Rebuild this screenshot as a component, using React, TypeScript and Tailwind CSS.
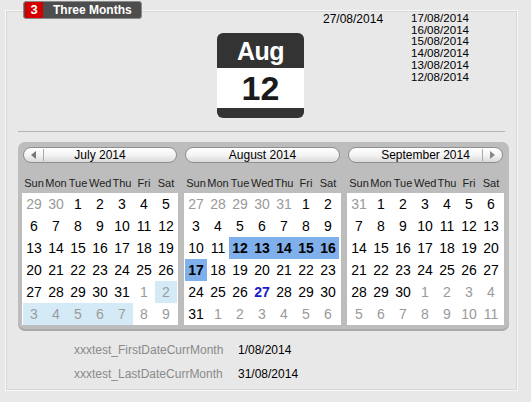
import React from 'react'

type Month = {
  title: string
  nav?: 'prev' | 'next'
  rows: number[][]
}

const MONTHS: Month[] = [
  {
    title: 'July 2014',
    nav: 'prev',
    rows: [
      [29, 30, 1, 2, 3, 4, 5],
      [6, 7, 8, 9, 10, 11, 12],
      [13, 14, 15, 16, 17, 18, 19],
      [20, 21, 22, 23, 24, 25, 26],
      [27, 28, 29, 30, 31, 1, 2],
      [3, 4, 5, 6, 7, 8, 9],
    ],
  },
  {
    title: 'August 2014',
    rows: [
      [27, 28, 29, 30, 31, 1, 2],
      [3, 4, 5, 6, 7, 8, 9],
      [10, 11, 12, 13, 14, 15, 16],
      [17, 18, 19, 20, 21, 22, 23],
      [24, 25, 26, 27, 28, 29, 30],
      [31, 1, 2, 3, 4, 5, 6],
    ],
  },
  {
    title: 'September 2014',
    nav: 'next',
    rows: [
      [31, 1, 2, 3, 4, 5, 6],
      [7, 8, 9, 10, 11, 12, 13],
      [14, 15, 16, 17, 18, 19, 20],
      [21, 22, 23, 24, 25, 26, 27],
      [28, 29, 30, 1, 2, 3, 4],
      [5, 6, 7, 8, 9, 10, 11],
    ],
  },
]

const DAYS = ['Sun', 'Mon', 'Tue', 'Wed', 'Thu', 'Fri', 'Sat']

// highlighted cells: month-row-col
const SELECTED = new Set(['1-2-2', '1-2-3', '1-2-4', '1-2-5', '1-2-6', '1-3-0'])
const WEEK = new Set(['0-4-6', '0-5-0', '0-5-1', '0-5-2', '0-5-3', '0-5-4'])
const TODAY = '1-4-3'

const RECENT = ['17/08/2014', '16/08/2014', '15/08/2014', '14/08/2014', '13/08/2014', '12/08/2014']

function isOther(row: number, d: number) {
  return (row === 0 && d > 7) || (row >= 4 && d < 15)
}

function MonthGrid({ month, mi }: { month: Month; mi: number }) {
  return (
    <div className="flex flex-col">
      <div className="relative mx-[1px] flex h-4 items-center justify-center rounded-full border border-[#8f8f8f] bg-gradient-to-b from-white via-[#f4f4f4] to-[#d9d9d9] text-[12px] leading-none text-black">
        {month.nav === 'prev' ? (
          <span className="absolute left-[7px] top-[1px] flex h-[12px] items-center gap-[7px]">
            <span className="h-0 w-0 border-y-[4px] border-r-[5px] border-y-transparent border-r-[#777]" />
            <span className="h-[12px] w-px bg-[#aaa]" />
          </span>
        ) : null}
        {month.nav === 'next' ? (
          <span className="absolute right-[7px] top-[1px] flex h-[12px] items-center gap-[7px]">
            <span className="h-[12px] w-px bg-[#aaa]" />
            <span className="h-0 w-0 border-y-[4px] border-l-[5px] border-y-transparent border-l-[#888]" />
          </span>
        ) : null}
        {month.title}
      </div>
      <div className="flex h-[30px] items-center px-[1px] pt-[10px]">
        {DAYS.map((d) => (
          <span key={d} className="w-[22px] text-center text-[11px] leading-none text-[#222]">
            {d}
          </span>
        ))}
      </div>
      <div className="flex flex-col bg-white px-[1px]">
        {month.rows.map((row, ri) => (
          <div key={ri} className="flex h-[22px]">
            {row.map((d, ci) => {
              const key = `${mi}-${ri}-${ci}`
              const other = isOther(ri, d)
              let cls = 'text-black'
              if (other) cls = 'text-[#9a9a9a]'
              if (SELECTED.has(key)) cls = 'bg-[#7fb0ec] font-bold text-black'
              if (WEEK.has(key)) cls = 'bg-[#d4ebf7] text-[#9a9a9a]'
              if (key === TODAY) cls = 'font-bold text-[#1a1ac8]'
              return (
                <span
                  key={ci}
                  className={`flex w-[22px] items-center justify-center text-[14px] leading-none ${cls}`}
                >
                  {d}
                </span>
              )
            })}
          </div>
        ))}
      </div>
    </div>
  )
}

export default function App() {
  return (
    <div className="h-[402px] w-[531px] overflow-hidden bg-[#e8e8e8] pt-[10px] font-['Liberation_Sans',Arial,sans-serif]">
      <div className="relative ml-[5px] h-[381px] w-[513px] border border-[#f8f8f8] shadow-[inset_0_0_0_1px_#d6d6d6]">
        <div className="absolute -top-[10px] left-[17px] flex h-[18px] w-[119px] items-center overflow-hidden rounded-[3px] border border-[#8a8a8a] bg-[#4d4d4d]">
          <span className="ml-[1px] flex h-[16px] w-[18px] items-center justify-center bg-[#d40000] text-[13px] font-bold text-white">
            3
          </span>
          <span className="ml-[10px] text-[12px] font-bold text-white">Three Months</span>
        </div>

        <div className="flex h-[120px] items-start">
          <div className="ml-[211px] mt-[22px] flex h-[85px] w-[87px] flex-col overflow-hidden rounded-[6px] bg-[#333]">
            <div className="flex h-[35px] items-center justify-center pt-[2px] text-[25px] font-bold leading-none tracking-[-0.5px] text-white">
              Aug
            </div>
            <div className="flex h-[40px] items-center justify-center bg-white text-[34px] font-bold leading-none text-[#1a1a1a]">
              12
            </div>
          </div>
          <div className="ml-[19px] mt-[2px] w-[88px] text-[12px] leading-[12px] text-black">27/08/2014</div>
          <div className="mt-[1px] flex flex-col text-[11.6px] leading-[11.7px] text-black">
            {RECENT.map((r) => (
              <span key={r}>{r}</span>
            ))}
          </div>
        </div>

        <div className="mx-[12px] border-t border-[#b4b4b4]" />

        <div className="ml-[12px] mt-[10px] flex w-[491px] gap-[6px] rounded-[7px] bg-[#bdbdbd] pb-[4px] pl-[4px] pr-[5px] pt-[5px] shadow-[0_2px_0_#a9a9a9]">
          {MONTHS.map((m, i) => (
            <div key={m.title} className={i === 0 ? 'w-[156px]' : 'w-[157px]'}>
              <MonthGrid month={m} mi={i} />
            </div>
          ))}
        </div>

        <div className="mt-[9px] flex flex-col pl-[68px] text-[12px]">
          <div className="flex h-[24px] items-center">
            <span className="w-[164px] text-[#8a8a8a]">xxxtest_FirstDateCurrMonth</span>
            <span className="text-black">1/08/2014</span>
          </div>
          <div className="flex h-[24px] items-center">
            <span className="w-[164px] text-[#8a8a8a]">xxxtest_LastDateCurrMonth</span>
            <span className="text-black">31/08/2014</span>
          </div>
        </div>
      </div>
    </div>
  )
}
